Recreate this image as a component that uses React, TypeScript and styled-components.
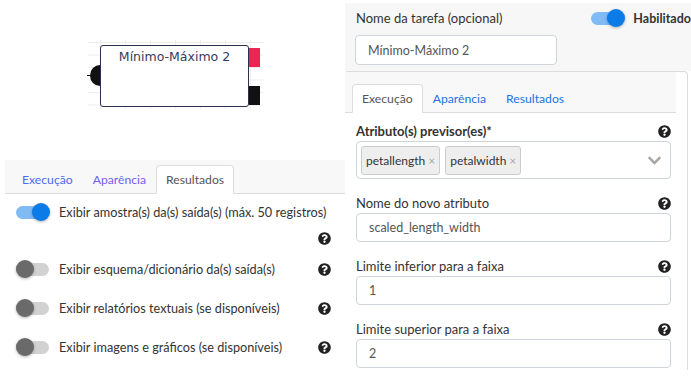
import React from 'react'
import { styled, createGlobalStyle } from 'styled-components'
import { FaQuestionCircle, FaChevronDown } from 'react-icons/fa'

const GlobalStyle = createGlobalStyle`
  body {
    margin: 0;
    background: #fff;
    font-family: Lato, "Noto Sans", sans-serif;
    color: #333;
  }
`

const outputs = [
  { label: 'Exibir amostra(s) da(s) saída(s) (máx. 50 registros)', on: true },
  { label: 'Exibir esquema/dicionário da(s) saída(s)', on: false },
  { label: 'Exibir relatórios textuais (se disponíveis)', on: false },
  { label: 'Exibir imagens e gráficos (se disponíveis)', on: false },
]

const Toggle = ({ on }: { on: boolean }) => (
  <Switch>
    <Track $on={on} />
    <Knob $on={on} />
  </Switch>
)

const Help = () => (
  <HelpIcon>
    <FaQuestionCircle size={13} />
  </HelpIcon>
)

const App = () => {
  return (
    <>
      <GlobalStyle />
      <Page>
        <LeftCol>
          <Canvas>
            <Grid />
            <InPort />
            <Node>Mínimo-Máximo 2</Node>
            <OutPort $color='#ee2452' $top={48} />
            <OutPort $color='#111' $top={86} />
          </Canvas>
          <TabBar $pad={7}>
            <Tab $tone='#4e6af0'>Execução</Tab>
            <Tab $tone='#6f62f2'>Aparência</Tab>
            <Tab $active>Resultados</Tab>
          </TabBar>
          <Options>
            {outputs.map((o, i) => (
              <OptionRow key={i} $first={i === 0}>
                <Toggle on={o.on} />
                <OptionBody>
                  <OptionLabel>{o.label}</OptionLabel>
                  <Help />
                </OptionBody>
              </OptionRow>
            ))}
          </Options>
        </LeftCol>

        <RightCol>
          <TopSection>
            <TopRow>
              <FieldLabel>Nome da tarefa (opcional)</FieldLabel>
              <Enabled>
                <Toggle on />
                <span>Habilitado</span>
              </Enabled>
            </TopRow>
            <TextBox $width={202}>Mínimo-Máximo 2</TextBox>
          </TopSection>

          <Card>
            <TabBar $pad={7} $right={11}>
              <Tab $active>Execução</Tab>
              <Tab $tone='#2373e6'>Aparência</Tab>
              <Tab $tone='#2373e6'>Resultados</Tab>
            </TabBar>
            <Form>
              <Field>
                <LabelRow>
                  <FieldLabel $bold>Atributo(s) previsor(es)*</FieldLabel>
                  <Help />
                </LabelRow>
                <SelectBox>
                  <Tags>
                    <TagChip>petallength <Remove>×</Remove></TagChip>
                    <TagChip>petalwidth <Remove>×</Remove></TagChip>
                  </Tags>
                  <FaChevronDown size={15} color='#a5a5a5' />
                </SelectBox>
              </Field>
              <Field>
                <LabelRow>
                  <FieldLabel>Nome do novo atributo</FieldLabel>
                  <Help />
                </LabelRow>
                <TextBox>scaled_length_width</TextBox>
              </Field>
              <Field>
                <LabelRow>
                  <FieldLabel>Limite inferior para a faixa</FieldLabel>
                  <Help />
                </LabelRow>
                <TextBox>1</TextBox>
              </Field>
              <Field>
                <LabelRow>
                  <FieldLabel>Limite superior para a faixa</FieldLabel>
                  <Help />
                </LabelRow>
                <TextBox>2</TextBox>
              </Field>
            </Form>
          </Card>
        </RightCol>
      </Page>
    </>
  )
}

export default App

const Page = styled.div`
    width: 691px;
    height: 388px;
    display: grid;
    grid-template-columns: 345px 346px;
    overflow: hidden;
`

const LeftCol = styled.div`
    display: flex;
    flex-direction: column;
`

const Canvas = styled.div`
    position: relative;
    height: 160px;
`

const Grid = styled.div`
    position: absolute;
    left: 88px;
    top: 40px;
    width: 175px;
    height: 69px;
    background-image:
        linear-gradient(to right, #ececec 1px, transparent 1px),
        linear-gradient(to bottom, #ececec 1px, transparent 1px);
    background-size: 25px 12.5px;
    background-position: 12px 2px;
`

const Node = styled.div`
    position: absolute;
    left: 100px;
    top: 45px;
    width: 149px;
    height: 62px;
    box-sizing: border-box;
    padding-top: 1px;
    background: #fff;
    border: 1px solid #2c3152;
    border-radius: 3px;
    text-align: center;
    font-family: "DejaVu Sans", sans-serif;
    font-size: 12.5px;
    line-height: 20px;
    color: #353b5e;
`

const InPort = styled.div`
    position: absolute;
    left: 87px;
    top: 65px;
    width: 20px;
    height: 21px;
    &::before {
        content: '';
        position: absolute;
        left: 3px;
        top: 0;
        width: 20px;
        height: 21px;
        border-radius: 50%;
        background: #111;
    }
    &::after {
        content: '';
        position: absolute;
        left: 0;
        top: 10px;
        width: 4px;
        height: 1px;
        background: #111;
    }
`

const OutPort = styled.div<{ $color: string; $top: number }>`
    position: absolute;
    left: 249px;
    top: ${p => p.$top}px;
    width: 11px;
    height: 19px;
    background: ${p => p.$color};
`

const TabBar = styled.div<{ $pad: number; $right?: number }>`
    display: flex;
    align-items: flex-end;
    height: 41px;
    box-sizing: border-box;
    margin-right: ${p => p.$right || 0}px;
    padding-left: ${p => p.$pad}px;
    background: #f8f8f8;
    border-bottom: 1px solid #dcdcdc;
    ${LeftCol} & {
        margin-left: 5px;
        height: 34px;
    }
`

const Tab = styled.div<{ $active?: boolean; $tone?: string }>`
    height: 29px;
    box-sizing: border-box;
    padding: 0 9px;
    margin-bottom: -1px;
    display: flex;
    align-items: center;
    font-size: 12.2px;
    color: ${p => p.$active ? '#555' : p.$tone};
    background: ${p => p.$active ? '#fff' : 'transparent'};
    border: 1px solid ${p => p.$active ? '#dcdcdc' : 'transparent'};
    border-bottom-color: ${p => p.$active ? '#fff' : 'transparent'};
    border-radius: 4px 4px 0 0;
`

const Options = styled.div`
    display: flex;
    flex-direction: column;
    gap: 20px;
    padding: 9px 14px 0 16px;
`

const OptionRow = styled.div<{ $first?: boolean }>`
    display: flex;
    align-items: flex-start;
    gap: 9px;
    margin-bottom: ${p => p.$first ? '-8px' : '0'};
`

const OptionBody = styled.div`
    flex: 1;
    display: flex;
    flex-wrap: wrap;
    align-items: center;
    column-gap: 9px;
    row-gap: 6px;
    margin-top: -1px;
`

const OptionLabel = styled.span`
    font-size: 12.7px;
    line-height: 20px;
    color: #333;
    white-space: nowrap;
`

const HelpIcon = styled.span`
    margin-left: auto;
    height: 20px;
    display: flex;
    align-items: center;
    color: #222;
`

const Switch = styled.span`
    position: relative;
    width: 34px;
    height: 18px;
    flex: none;
`

const Track = styled.span<{ $on: boolean }>`
    position: absolute;
    left: 0;
    top: 3px;
    width: 33px;
    height: 13px;
    border-radius: 7px;
    background: ${p => p.$on ? '#80bbf6' : '#d2d2d2'};
`

const Knob = styled.span<{ $on: boolean }>`
    position: absolute;
    top: 0;
    left: ${p => p.$on ? '16px' : '0'};
    width: 18px;
    height: 18px;
    border-radius: 50%;
    background: ${p => p.$on ? '#0b7be8' : '#6a6a6a'};
    box-shadow: 0 1px 3px rgba(0, 0, 0, 0.3);
`

const RightCol = styled.div`
    display: flex;
    flex-direction: column;
    padding-top: 3px;
`

const TopSection = styled.div`
    background: #f7f7f7;
    padding: 6px 0 6px 10px;
    height: 68px;
    box-sizing: border-box;
`

const TopRow = styled.div`
    display: flex;
    align-items: center;
    height: 18px;
    margin-bottom: 8px;
    padding-left: 1px;
`

const Enabled = styled.div`
    margin-left: auto;
    display: flex;
    align-items: center;
    gap: 8px;
    font-size: 12.5px;
    font-weight: 700;
    color: #333;
    white-space: nowrap;
`

const FieldLabel = styled.span<{ $bold?: boolean }>`
    font-size: 13px;
    line-height: 16px;
    font-weight: ${p => p.$bold ? 700 : 400};
    color: #333;
`

const TextBox = styled.div<{ $width?: number }>`
    width: ${p => p.$width ? `${p.$width}px` : 'auto'};
    height: ${p => p.$width ? 30 : 29}px;
    box-sizing: border-box;
    padding-left: 12px;
    display: flex;
    align-items: center;
    background: #fff;
    border: 1px solid #cfd4da;
    border-radius: 4px;
    font-size: 12.5px;
    color: #555;
`

const Card = styled.div`
    flex: 1;
    margin-right: 3px;
    border-top: 1px solid #dcdcdc;
    border-right: 1px solid #dcdcdc;
    border-radius: 3px 4px 0 0;
    margin-bottom: 18px;
`

const Form = styled.div`
    padding: 10px 16px 0 11px;
    display: flex;
    flex-direction: column;
    gap: 16px;
`

const Field = styled.div`
    display: flex;
    flex-direction: column;
    gap: 2px;
`

const LabelRow = styled.div`
    display: flex;
    align-items: center;
    height: 16px;
`

const SelectBox = styled.div`
    height: 38px;
    box-sizing: border-box;
    display: flex;
    align-items: center;
    padding: 0 8px 0 4px;
    border: 1px solid #cfd4da;
    border-radius: 4px;
    background: #fff;
`

const Tags = styled.div`
    flex: 1;
    display: flex;
    gap: 5px;
`

const TagChip = styled.span`
    height: 29px;
    box-sizing: border-box;
    display: flex;
    align-items: center;
    gap: 3px;
    padding: 0 4px 0 4px;
    background: #eeeeee;
    border: 1px solid #cccccc;
    border-radius: 3px;
    font-size: 12px;
    color: #333;
`

const Remove = styled.span`
    color: #a8a8a8;
    font-size: 12px;
`
